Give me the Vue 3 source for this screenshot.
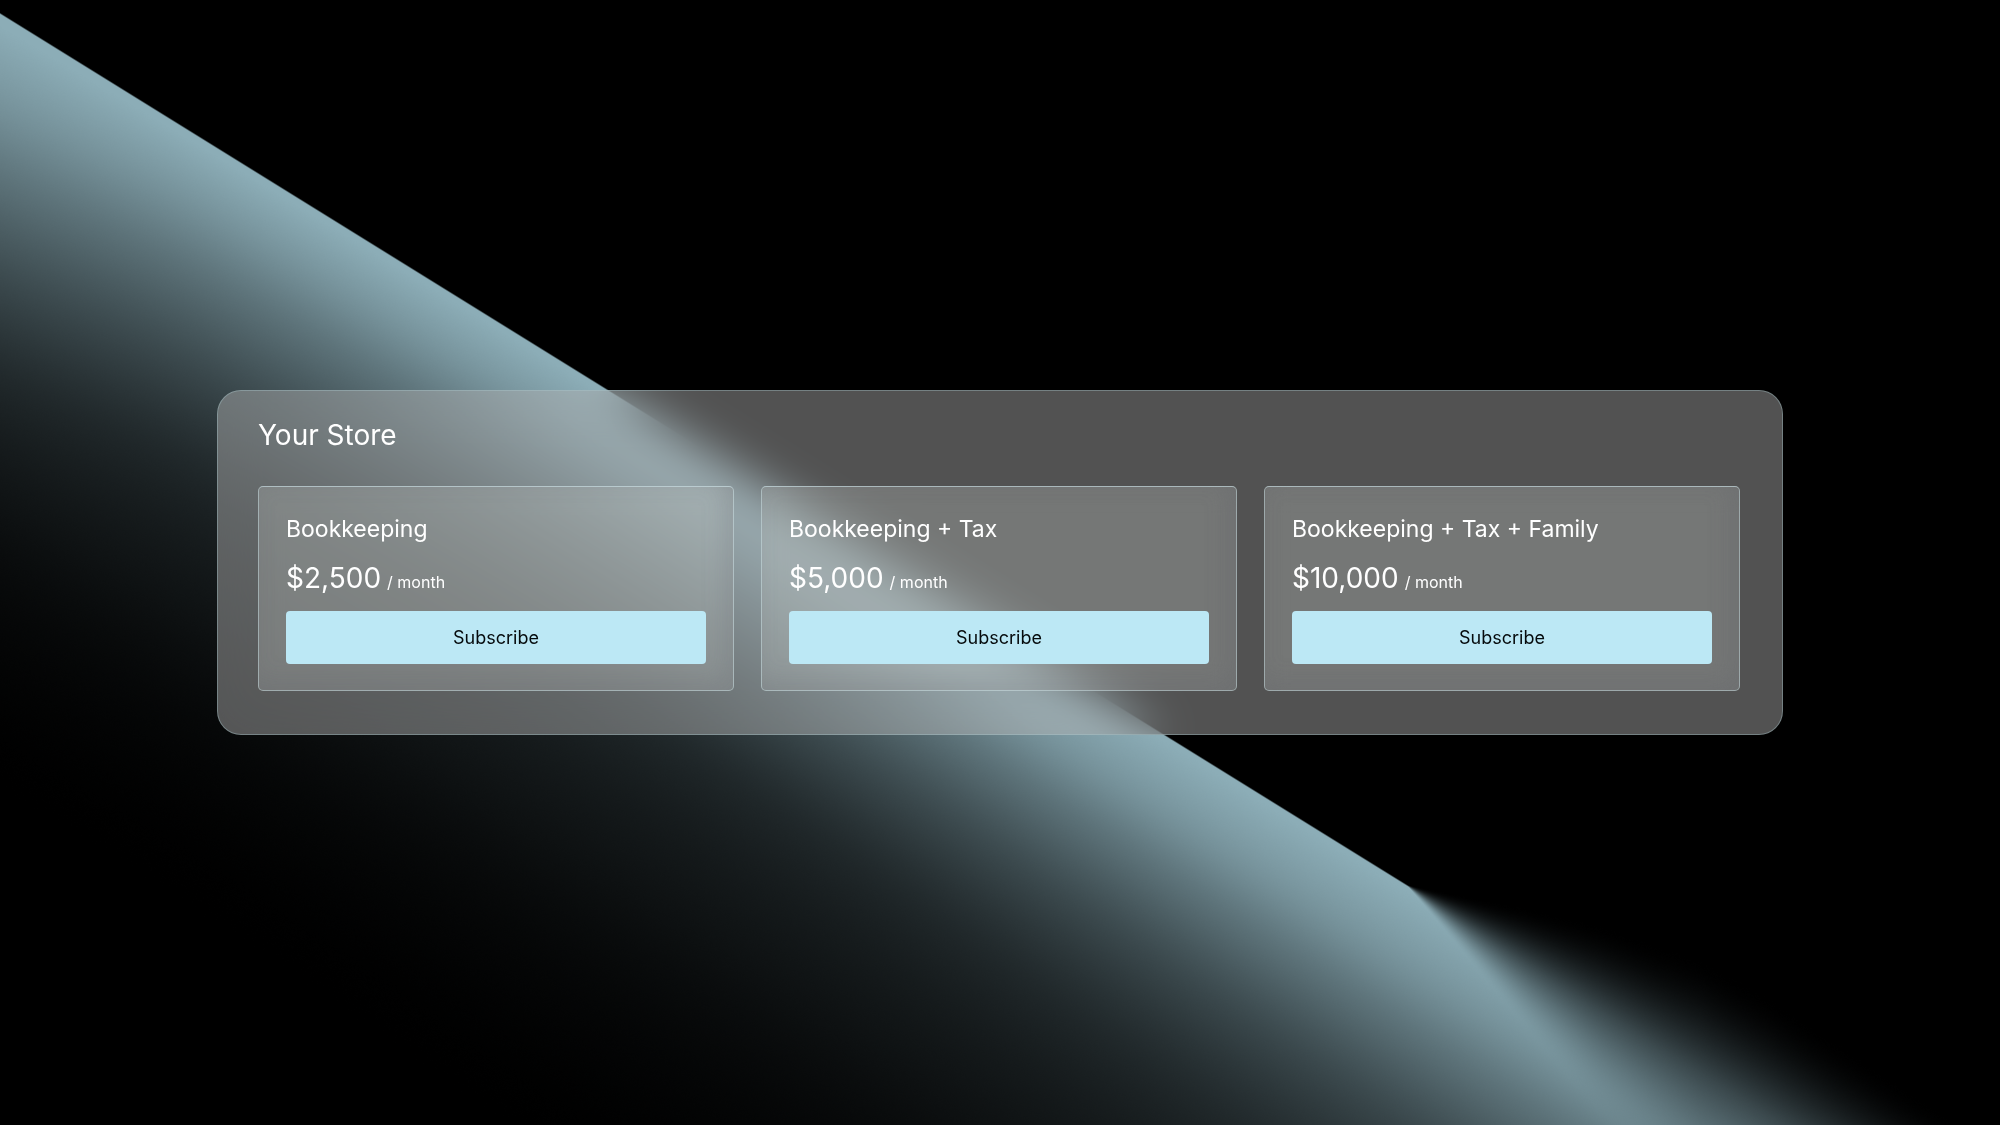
<script setup>
import { onBeforeUnmount, onMounted, ref } from 'vue'

const plans = [
  { id: 'books', name: 'Bookkeeping', price: '$2,500' },
  { id: 'books-tax', name: 'Bookkeeping + Tax', price: '$5,000' },
  { id: 'books-tax-family', name: 'Bookkeeping + Tax + Family', price: '$10,000' },
]

const canvas = ref(null)

// The beam is described in a 2000 x 1125 design space and scaled to cover the window.
const DESIGN = { width: 2000, height: 1125 }
const TINT = [140, 173, 183]
const EDGE = { start: 13, slope: 0.6197 }

// Depth below the beam's edge at which each light level is reached, per column.
const LEVELS = [1, 0.85, 0.65, 0.4, 0.22, 0.09, 0.03, 0]
const COLUMNS = [
  { x: 0, depths: [12, 90, 170, 277, 375, 510, 630, 780] },
  { x: 215, depths: [8, 68, 138, 240, 340, 500, 620, 780] },
  { x: 700, depths: [6, 68, 130, 224, 320, 500, 640, 820] },
  { x: 1300, depths: [6, 78, 145, 242, 360, 540, 700, 880] },
  { x: 2000, depths: [6, 84, 155, 262, 390, 610, 800, 940] },
]
const SOFTNESS = [[1406, 0], [1527, 52], [1600, 80], [1700, 108], [1771, 112], [2000, 102]]

function smooth(t) {
  const c = Math.min(1, Math.max(0, t))
  return c * c * (3 - 2 * c)
}

// Cubic Hermite interpolation over a run of points, with the given end slope.
function curve(xs, ys, endSlope) {
  const last = xs.length - 1
  const slopes = ys.map((_, k) => {
    const p = Math.max(0, k - 1)
    const n = Math.min(last, k + 1)
    return (ys[n] - ys[p]) / (xs[n] - xs[p])
  })
  if (endSlope !== undefined) slopes[last] = endSlope
  return (x) => {
    if (x <= xs[0]) return ys[0]
    for (let k = 1; k <= last; k++) {
      if (x > xs[k]) continue
      const h = xs[k] - xs[k - 1]
      const t = (x - xs[k - 1]) / h
      const t2 = t * t
      const t3 = t2 * t
      return (2 * t3 - 3 * t2 + 1) * ys[k - 1] + (t3 - 2 * t2 + t) * h * slopes[k - 1]
        + (3 * t2 - 2 * t3) * ys[k] + (t3 - t2) * h * slopes[k]
    }
    return ys[last]
  }
}

const depthCurves = LEVELS.map((_, k) =>
  curve(COLUMNS.map((c) => c.x), COLUMNS.map((c) => c.depths[k])),
)

const softnessAt = (x) => {
  for (let i = 1; i < SOFTNESS.length; i++) {
    const [x0, w0] = SOFTNESS[i - 1]
    const [x1, w1] = SOFTNESS[i]
    if (x >= x0 && x <= x1) return w0 + ((w1 - w0) * (x - x0)) / (x1 - x0)
  }
  return 0
}

function paint() {
  const el = canvas.value
  const width = (el.width = window.innerWidth)
  const height = (el.height = window.innerHeight)
  const ctx = el.getContext('2d')
  const image = ctx.createImageData(width, height)
  for (let px = 0; px < width; px++) {
    const x = (px * DESIGN.width) / width
    const profile = curve(depthCurves.map((depth) => depth(x)), LEVELS, 0)
    const soft = Math.max(1, softnessAt(x))
    for (let py = 0; py < height; py++) {
      const y = (py * DESIGN.height) / height
      const d = y - EDGE.start - EDGE.slope * x
      const light = profile(d) * smooth((d + soft) / (2.4 * soft))
      const o = (py * width + px) * 4
      const noise = Math.random() - 0.5
      image.data[o] = TINT[0] * light + noise
      image.data[o + 1] = TINT[1] * light + noise
      image.data[o + 2] = TINT[2] * light + noise
      image.data[o + 3] = 255
    }
  }
  ctx.putImageData(image, 0, 0)
}

onMounted(() => {
  paint()
  window.addEventListener('resize', paint)
})
onBeforeUnmount(() => window.removeEventListener('resize', paint))
</script>

<template>
  <main class="page">
    <canvas ref="canvas" class="beam" aria-hidden="true"></canvas>
    <section class="store" aria-labelledby="store-title">
      <h1 id="store-title" class="store-title">Your Store</h1>
      <div class="plans">
        <article v-for="plan in plans" :key="plan.id" class="plan">
          <h2 class="plan-name">{{ plan.name }}</h2>
          <p class="plan-price">
            <span class="amount">{{ plan.price }}</span>
            <span class="period">/ month</span>
          </p>
          <button type="button" class="subscribe">Subscribe</button>
        </article>
      </div>
    </section>
  </main>
</template>

<style>
body {
  margin: 0;
  background: #000;
}
</style>

<style scoped>
.page {
  position: relative;
  box-sizing: border-box;
  display: flex;
  align-items: center;
  justify-content: center;
  min-height: 100vh;
  padding: 24px;
  overflow: hidden;
  color: #fff;
  font-family: Inter, "Liberation Sans", sans-serif;
}

.beam {
  position: absolute;
  inset: 0;
  width: 100%;
  height: 100%;
}

.store {
  position: relative;
  box-sizing: border-box;
  width: 100%;
  max-width: 1566px;
  padding: 27px 43px 44px 41px;
}

/* The glass sits on its own layer so that the cards can blur the scene too. */
.store::before {
  content: "";
  position: absolute;
  inset: 0;
  border: 1px solid rgba(170, 200, 206, 0.4);
  border-radius: 24px;
  background: rgba(182, 182, 182, 0.45);
  backdrop-filter: blur(24px);
}

.store-title {
  position: relative;
  margin: 0 0 32px;
  font-size: 28px;
  line-height: 37px;
  font-weight: 400;
}

.plans {
  display: grid;
  grid-template-columns: repeat(auto-fit, minmax(320px, 1fr));
  gap: 27px;
}

.plan {
  position: relative;
  display: flex;
  flex-direction: column;
  gap: 16px;
  padding: 26px 27px;
  border: 1px solid rgba(200, 222, 226, 0.5);
  border-top-color: rgba(200, 222, 226, 0.65);
  border-radius: 5px;
  background: rgba(186, 191, 189, 0.34);
  box-shadow: inset -8px -8px 24px rgba(90, 92, 100, 0.2);
  backdrop-filter: blur(12px);
}

.plan-name {
  margin: 0;
  font-size: 23px;
  line-height: 32px;
  font-weight: 400;
}

.plan-price {
  display: flex;
  align-items: baseline;
  gap: 6px;
  margin: 0;
}

.amount {
  font-size: 28px;
  line-height: 34px;
}

.period {
  font-size: 16px;
  line-height: 20px;
}

.subscribe {
  height: 53px;
  border: 0;
  border-radius: 4px;
  background: #bce8f5;
  color: #050a0c;
  font-family: inherit;
  font-size: 18px;
  font-weight: 400;
  cursor: pointer;
}
</style>
